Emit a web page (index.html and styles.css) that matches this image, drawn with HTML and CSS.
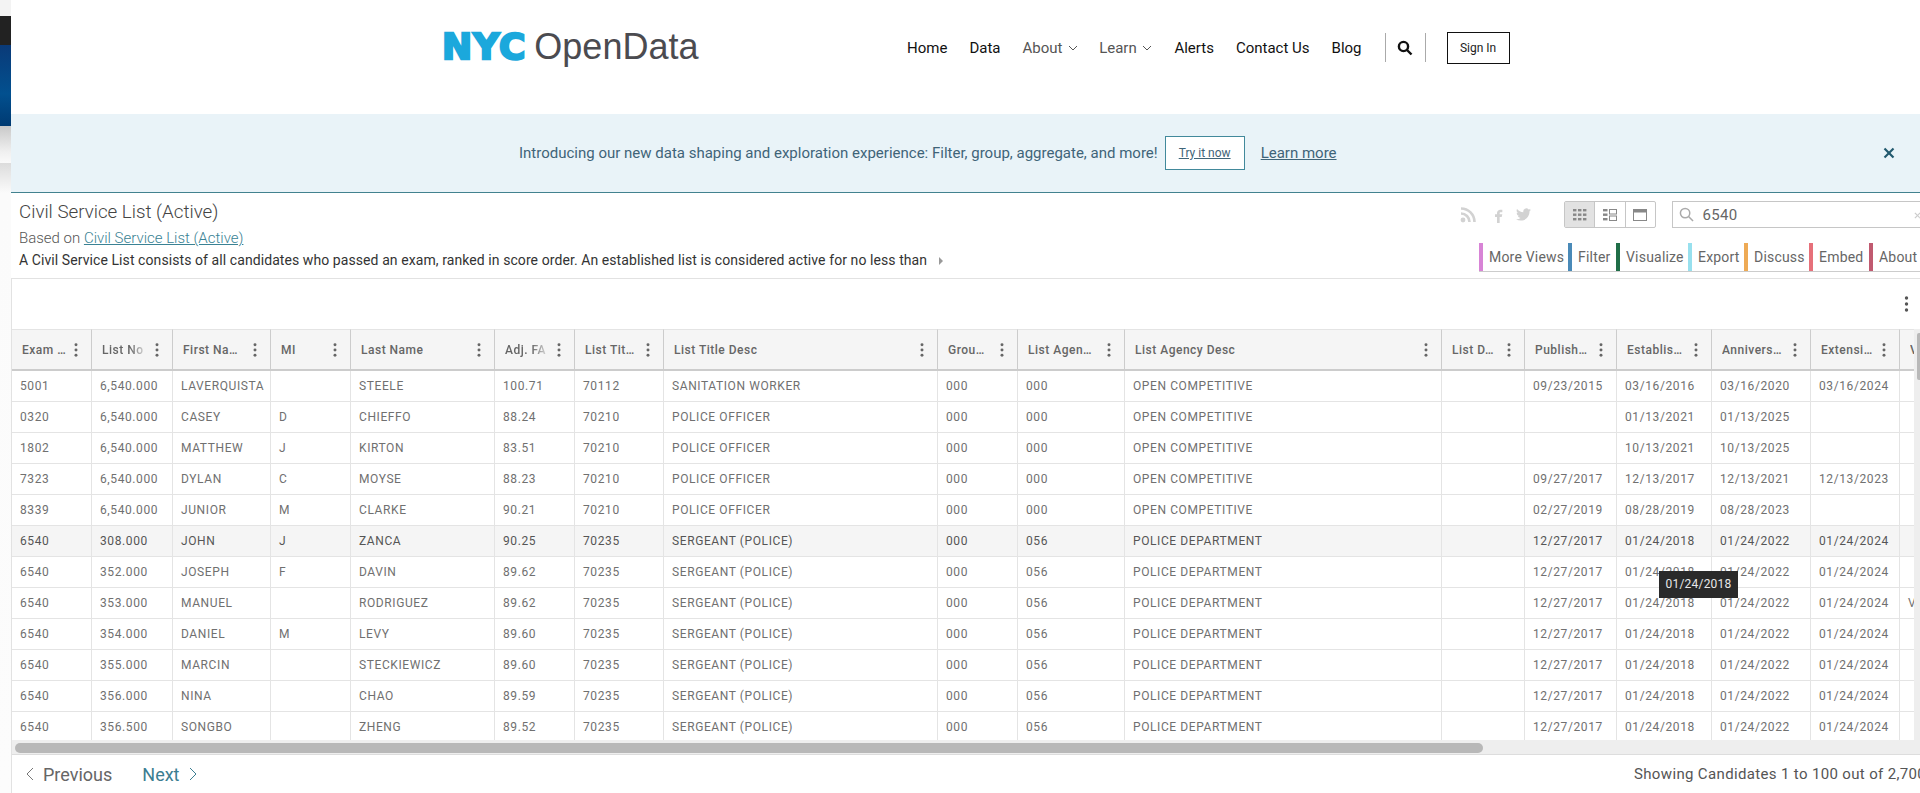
FILE: index.html
```html
<!DOCTYPE html>
<html lang="en">
<head>
<meta charset="utf-8">
<title>Civil Service List (Active) | NYC Open Data</title>
<link rel="stylesheet" href="styles.css">
</head>
<body>
<div class="shell">
  <div class="strip">
    <div class="strip-top"></div>
    <div class="strip-dark"></div>
    <div class="strip-blue"></div>
    <div class="strip-fade"></div>
    <div class="strip-rest"></div>
  </div>
  <div class="page">
    <header class="site-header">
      <a class="logo"><span class="logo-nyc">NYC</span><span class="logo-open">OpenData</span></a>
      <nav class="nav">
        <a class="nav-home">Home</a>
        <a class="nav-data">Data</a>
        <a class="nav-sub nav-about">About <svg class="caret" viewBox="0 0 10 6"><polyline points="1,1 5,5 9,1"/></svg></a>
        <a class="nav-sub nav-learn">Learn <svg class="caret" viewBox="0 0 10 6"><polyline points="1,1 5,5 9,1"/></svg></a>
        <a class="nav-alerts">Alerts</a>
        <a class="nav-contact">Contact Us</a>
        <a class="nav-blog">Blog</a>
        <span class="nav-search"><svg class="nav-glass" viewBox="0 0 16 16"><circle cx="6.5" cy="6.5" r="4.6"/><line x1="10" y1="10" x2="14.5" y2="14.5"/></svg></span>
        <a class="signin">Sign In</a>
      </nav>
    </header>

    <section class="banner">
      <span class="banner-text">Introducing our new data shaping and exploration experience: Filter, group, aggregate, and more!</span>
      <a class="try">Try it now</a>
      <a class="learn">Learn more</a>
      <svg class="banner-close" viewBox="0 0 12 12"><line x1="1.5" y1="1.5" x2="10.5" y2="10.5"/><line x1="10.5" y1="1.5" x2="1.5" y2="10.5"/></svg>
    </section>

    <section class="meta">
      <div class="meta-left">
        <h1 class="title">Civil Service List (Active)</h1>
        <p class="based">Based on <a>Civil Service List (Active)</a></p>
        <p class="desc">A Civil Service List consists of all candidates who passed an exam, ranked in score order. An established list is considered active for no less than <svg class="more-arrow" viewBox="0 0 6 10"><polygon points="1,1 5,5 1,9"/></svg></p>
      </div>
      <div class="meta-right">
        <div class="tools">
          <svg class="soc soc-rss" viewBox="0 0 16 16"><circle cx="3" cy="13" r="2.4" class="fillg"/><path d="M1 6.5a8.5 8.5 0 0 1 8.5 8.5" class="strokeg"/><path d="M1 1.5A13.5 13.5 0 0 1 14.5 15" class="strokeg"/></svg>
          <svg class="soc soc-f" viewBox="0 0 24 24"><path class="fillg" d="M14 8h3V4h-3c-2.8 0-5 2.2-5 5v2H6v4h3v9h4v-9h3l1-4h-4V9c0-.6.4-1 1-1z"/></svg>
          <svg class="soc soc-tw" viewBox="0 0 24 24"><path class="fillg" d="M23.953 4.57a10 10 0 01-2.825.775 4.958 4.958 0 002.163-2.723c-.951.555-2.005.959-3.127 1.184a4.92 4.92 0 00-8.384 4.482C7.69 8.095 4.067 6.13 1.64 3.162a4.822 4.822 0 00-.666 2.475c0 1.71.87 3.213 2.188 4.096a4.904 4.904 0 01-2.228-.616v.06a4.923 4.923 0 003.946 4.827 4.996 4.996 0 01-2.212.085 4.936 4.936 0 004.604 3.417 9.867 9.867 0 01-6.102 2.105c-.39 0-.779-.023-1.17-.067a13.995 13.995 0 007.557 2.209c9.053 0 13.998-7.496 13.998-13.985 0-.21 0-.42-.015-.63A9.935 9.935 0 0024 4.59z"/></svg>
          <div class="views">
            <span class="view view-on"><svg viewBox="0 0 14 12"><rect x="0" y="0" width="3.4" height="2.4"/><rect x="5" y="0" width="3.4" height="2.4"/><rect x="10" y="0" width="3.4" height="2.4"/><rect x="0" y="4.5" width="3.4" height="2.4"/><rect x="5" y="4.5" width="3.4" height="2.4"/><rect x="10" y="4.5" width="3.4" height="2.4"/><rect x="0" y="9" width="3.4" height="2.4"/><rect x="5" y="9" width="3.4" height="2.4"/><rect x="10" y="9" width="3.4" height="2.4"/></svg></span>
            <span class="view"><svg viewBox="0 0 14 12"><rect x="0" y="0" width="4.5" height="2.4"/><rect x="0" y="4.5" width="4.5" height="2.4"/><rect x="0" y="9" width="4.5" height="2.4"/><rect class="hollow" x="6.5" y="0.5" width="7" height="4.5"/><rect class="hollow" x="6.5" y="7" width="7" height="4.5"/></svg></span>
            <span class="view"><svg viewBox="0 0 14 12"><rect x="0" y="0" width="14" height="3"/><rect class="hollow" x="0.5" y="3" width="13" height="8.5"/></svg></span>
          </div>
          <div class="search">
            <svg class="glass" viewBox="0 0 16 16"><circle cx="6.5" cy="6.5" r="5"/><line x1="10.2" y1="10.2" x2="15" y2="15"/></svg>
            <span class="search-value">6540</span>
            <svg class="search-x" viewBox="0 0 8 8"><line x1="1" y1="1" x2="7" y2="7"/><line x1="7" y1="1" x2="1" y2="7"/></svg>
          </div>
        </div>
        <div class="tabs">
          <a class="tab tab-views">More Views</a>
          <a class="tab tab-filter">Filter</a>
          <a class="tab tab-vis">Visualize</a>
          <a class="tab tab-export">Export</a>
          <a class="tab tab-discuss">Discuss</a>
          <a class="tab tab-embed">Embed</a>
          <a class="tab tab-about">About</a>
        </div>
      </div>
    </section>

    <section class="panel">
      <div class="panel-bar"><svg class="kebab kebab-main" viewBox="0 0 4 16"><circle cx="2" cy="2" r="1.7"/><circle cx="2" cy="8" r="1.7"/><circle cx="2" cy="14" r="1.7"/></svg></div>
      <div class="grid-row">
        <div class="grid-clip">
          <table class="grid">
            <colgroup>
              <col class="c1"><col class="c2"><col class="c3"><col class="c4"><col class="c5"><col class="c6"><col class="c7"><col class="c8"><col class="c9"><col class="c10"><col class="c11"><col class="c12"><col class="c13"><col class="c14"><col class="c15"><col class="c16"><col class="c17">
            </colgroup>
            <thead>
              <tr>
                <th><div class="hc"><span>Exam …</span><svg class="kebab" viewBox="0 0 4 16"><circle cx="2" cy="2" r="1.7"/><circle cx="2" cy="8" r="1.7"/><circle cx="2" cy="14" r="1.7"/></svg></div></th>
                <th><div class="hc"><span class="fade">List No</span><svg class="kebab" viewBox="0 0 4 16"><circle cx="2" cy="2" r="1.7"/><circle cx="2" cy="8" r="1.7"/><circle cx="2" cy="14" r="1.7"/></svg></div></th>
                <th><div class="hc"><span>First Na…</span><svg class="kebab" viewBox="0 0 4 16"><circle cx="2" cy="2" r="1.7"/><circle cx="2" cy="8" r="1.7"/><circle cx="2" cy="14" r="1.7"/></svg></div></th>
                <th><div class="hc"><span>MI</span><svg class="kebab" viewBox="0 0 4 16"><circle cx="2" cy="2" r="1.7"/><circle cx="2" cy="8" r="1.7"/><circle cx="2" cy="14" r="1.7"/></svg></div></th>
                <th><div class="hc"><span>Last Name</span><svg class="kebab" viewBox="0 0 4 16"><circle cx="2" cy="2" r="1.7"/><circle cx="2" cy="8" r="1.7"/><circle cx="2" cy="14" r="1.7"/></svg></div></th>
                <th><div class="hc"><span class="fade">Adj. FA</span><svg class="kebab" viewBox="0 0 4 16"><circle cx="2" cy="2" r="1.7"/><circle cx="2" cy="8" r="1.7"/><circle cx="2" cy="14" r="1.7"/></svg></div></th>
                <th><div class="hc"><span>List Tit…</span><svg class="kebab" viewBox="0 0 4 16"><circle cx="2" cy="2" r="1.7"/><circle cx="2" cy="8" r="1.7"/><circle cx="2" cy="14" r="1.7"/></svg></div></th>
                <th><div class="hc"><span>List Title Desc</span><svg class="kebab" viewBox="0 0 4 16"><circle cx="2" cy="2" r="1.7"/><circle cx="2" cy="8" r="1.7"/><circle cx="2" cy="14" r="1.7"/></svg></div></th>
                <th><div class="hc"><span>Grou…</span><svg class="kebab" viewBox="0 0 4 16"><circle cx="2" cy="2" r="1.7"/><circle cx="2" cy="8" r="1.7"/><circle cx="2" cy="14" r="1.7"/></svg></div></th>
                <th><div class="hc"><span>List Agen…</span><svg class="kebab" viewBox="0 0 4 16"><circle cx="2" cy="2" r="1.7"/><circle cx="2" cy="8" r="1.7"/><circle cx="2" cy="14" r="1.7"/></svg></div></th>
                <th><div class="hc"><span>List Agency Desc</span><svg class="kebab" viewBox="0 0 4 16"><circle cx="2" cy="2" r="1.7"/><circle cx="2" cy="8" r="1.7"/><circle cx="2" cy="14" r="1.7"/></svg></div></th>
                <th><div class="hc"><span>List D…</span><svg class="kebab" viewBox="0 0 4 16"><circle cx="2" cy="2" r="1.7"/><circle cx="2" cy="8" r="1.7"/><circle cx="2" cy="14" r="1.7"/></svg></div></th>
                <th><div class="hc"><span>Publish…</span><svg class="kebab" viewBox="0 0 4 16"><circle cx="2" cy="2" r="1.7"/><circle cx="2" cy="8" r="1.7"/><circle cx="2" cy="14" r="1.7"/></svg></div></th>
                <th><div class="hc"><span>Establis…</span><svg class="kebab" viewBox="0 0 4 16"><circle cx="2" cy="2" r="1.7"/><circle cx="2" cy="8" r="1.7"/><circle cx="2" cy="14" r="1.7"/></svg></div></th>
                <th><div class="hc"><span>Annivers…</span><svg class="kebab" viewBox="0 0 4 16"><circle cx="2" cy="2" r="1.7"/><circle cx="2" cy="8" r="1.7"/><circle cx="2" cy="14" r="1.7"/></svg></div></th>
                <th><div class="hc"><span>Extensi…</span><svg class="kebab" viewBox="0 0 4 16"><circle cx="2" cy="2" r="1.7"/><circle cx="2" cy="8" r="1.7"/><circle cx="2" cy="14" r="1.7"/></svg></div></th>
                <th><div class="hc"><span>V</span></div></th>
              </tr>
            </thead>
            <tbody>
              <tr><td>5001</td><td>6,540.000</td><td>LAVERQUISTA</td><td></td><td>STEELE</td><td>100.71</td><td>70112</td><td>SANITATION WORKER</td><td>000</td><td>000</td><td>OPEN COMPETITIVE</td><td></td><td>09/23/2015</td><td>03/16/2016</td><td>03/16/2020</td><td>03/16/2024</td><td></td></tr>
              <tr><td>0320</td><td>6,540.000</td><td>CASEY</td><td>D</td><td>CHIEFFO</td><td>88.24</td><td>70210</td><td>POLICE OFFICER</td><td>000</td><td>000</td><td>OPEN COMPETITIVE</td><td></td><td></td><td>01/13/2021</td><td>01/13/2025</td><td></td><td></td></tr>
              <tr><td>1802</td><td>6,540.000</td><td>MATTHEW</td><td>J</td><td>KIRTON</td><td>83.51</td><td>70210</td><td>POLICE OFFICER</td><td>000</td><td>000</td><td>OPEN COMPETITIVE</td><td></td><td></td><td>10/13/2021</td><td>10/13/2025</td><td></td><td></td></tr>
              <tr><td>7323</td><td>6,540.000</td><td>DYLAN</td><td>C</td><td>MOYSE</td><td>88.23</td><td>70210</td><td>POLICE OFFICER</td><td>000</td><td>000</td><td>OPEN COMPETITIVE</td><td></td><td>09/27/2017</td><td>12/13/2017</td><td>12/13/2021</td><td>12/13/2023</td><td></td></tr>
              <tr><td>8339</td><td>6,540.000</td><td>JUNIOR</td><td>M</td><td>CLARKE</td><td>90.21</td><td>70210</td><td>POLICE OFFICER</td><td>000</td><td>000</td><td>OPEN COMPETITIVE</td><td></td><td>02/27/2019</td><td>08/28/2019</td><td>08/28/2023</td><td></td><td></td></tr>
              <tr class="row-hover"><td>6540</td><td>308.000</td><td>JOHN</td><td>J</td><td>ZANCA</td><td>90.25</td><td>70235</td><td>SERGEANT (POLICE)</td><td>000</td><td>056</td><td>POLICE DEPARTMENT</td><td></td><td>12/27/2017</td><td>01/24/2018</td><td>01/24/2022</td><td>01/24/2024</td><td></td></tr>
              <tr><td>6540</td><td>352.000</td><td>JOSEPH</td><td>F</td><td>DAVIN</td><td>89.62</td><td>70235</td><td>SERGEANT (POLICE)</td><td>000</td><td>056</td><td>POLICE DEPARTMENT</td><td></td><td>12/27/2017</td><td>01/24/2018</td><td>01/24/2022</td><td>01/24/2024</td><td></td></tr>
              <tr><td>6540</td><td>353.000</td><td>MANUEL</td><td></td><td>RODRIGUEZ</td><td>89.62</td><td>70235</td><td>SERGEANT (POLICE)</td><td>000</td><td>056</td><td>POLICE DEPARTMENT</td><td></td><td>12/27/2017</td><td>01/24/2018</td><td>01/24/2022</td><td>01/24/2024</td><td>V</td></tr>
              <tr><td>6540</td><td>354.000</td><td>DANIEL</td><td>M</td><td>LEVY</td><td>89.60</td><td>70235</td><td>SERGEANT (POLICE)</td><td>000</td><td>056</td><td>POLICE DEPARTMENT</td><td></td><td>12/27/2017</td><td>01/24/2018</td><td>01/24/2022</td><td>01/24/2024</td><td></td></tr>
              <tr><td>6540</td><td>355.000</td><td>MARCIN</td><td></td><td>STECKIEWICZ</td><td>89.60</td><td>70235</td><td>SERGEANT (POLICE)</td><td>000</td><td>056</td><td>POLICE DEPARTMENT</td><td></td><td>12/27/2017</td><td>01/24/2018</td><td>01/24/2022</td><td>01/24/2024</td><td></td></tr>
              <tr><td>6540</td><td>356.000</td><td>NINA</td><td></td><td>CHAO</td><td>89.59</td><td>70235</td><td>SERGEANT (POLICE)</td><td>000</td><td>056</td><td>POLICE DEPARTMENT</td><td></td><td>12/27/2017</td><td>01/24/2018</td><td>01/24/2022</td><td>01/24/2024</td><td></td></tr>
              <tr><td>6540</td><td>356.500</td><td>SONGBO</td><td></td><td>ZHENG</td><td>89.52</td><td>70235</td><td>SERGEANT (POLICE)</td><td>000</td><td>056</td><td>POLICE DEPARTMENT</td><td></td><td>12/27/2017</td><td>01/24/2018</td><td>01/24/2022</td><td>01/24/2024</td><td></td></tr>
            </tbody>
          </table>
        </div>
        <div class="vscroll"><div class="vthumb"></div></div>
      </div>
      <div class="hscroll"><div class="hthumb"></div></div>
      <footer class="pager">
        <div class="pager-links">
          <a class="prev"><svg class="chev" viewBox="0 0 8 14"><polyline points="7,1 1,7 7,13"/></svg>Previous</a>
          <a class="next">Next<svg class="chev" viewBox="0 0 8 14"><polyline points="1,1 7,7 1,13"/></svg></a>
        </div>
        <span class="showing">Showing Candidates 1 to 100 out of 2,700</span>
      </footer>
      <div class="tooltip">01/24/2018</div>
    </section>
  </div>
</div>
</body>
</html>
```

FILE: styles.css
```css
* { box-sizing: border-box; }
html, body { margin: 0; padding: 0; height: 793px; overflow: hidden; background: #fff; }
body { font-family: Roboto, "Liberation Sans", sans-serif; color: #444; }
a { color: inherit; text-decoration: none; }
h1, p { margin: 0; }

.shell { display: flex; width: 1920px; height: 793px; overflow: hidden; }

.strip { width: 11px; flex: none; display: flex; flex-direction: column; }
.strip-top { height: 16px; background: #f3f3f3; }
.strip-dark { height: 29px; background: #222; }
.strip-blue { height: 81px; background: linear-gradient(180deg, #0a3a78 0%, #02508f 60%, #003a72 100%); }
.strip-fade { height: 37px; background: linear-gradient(180deg, #c9c9c9 0%, #f0f0f0 70%, #fafafa 100%); }
.strip-rest { flex: 1; background: linear-gradient(180deg, #dcdcdc 0, #fbfbfb 30px, #fcfcfc 100%); }

.page { width: 1909px; flex: none; display: flex; flex-direction: column; position: relative; overflow: hidden; }

.site-header { height: 114px; flex: none; display: flex; align-items: flex-start; padding-left: 431px; }
.logo { display: flex; align-items: baseline; margin-top: 27px; width: 465px; flex: none; }
.logo-nyc { font-family: "DejaVu Sans", sans-serif; font-weight: 700; font-size: 36px; line-height: 40px; color: #1ba8dc; -webkit-text-stroke: 2.4px #1ba8dc; letter-spacing: 1px; }
.logo-open { font-family: "Liberation Sans", sans-serif; font-size: 36px; line-height: 40px; color: #4b4b50; margin-left: 8px; }

.nav { display: flex; align-items: center; height: 31px; margin-top: 32px; font-size: 15px; color: #111; }
.nav a { display: block; }
.nav-data { margin-left: 22px; }
.nav-about { margin-left: 22px; }
.nav-learn { margin-left: 21px; }
.nav-alerts { margin-left: 22px; }
.nav-contact { margin-left: 22px; }
.nav-blog { margin-left: 22px; }
.nav-sub { color: #555; }
.caret { width: 10px; height: 6px; margin-left: 2px; vertical-align: 2px; fill: none; stroke: #555; stroke-width: 1; }
.nav-search { display: flex; align-items: center; justify-content: center; width: 41px; height: 29px; margin-left: 23px; border-left: 1px solid #aaa; border-right: 1px solid #aaa; }
.nav-glass { width: 16px; height: 16px; fill: none; stroke: #111; stroke-width: 2.4; }
.signin { width: 63px; height: 32px; margin-left: 21px; border: 1px solid #111; font-size: 12px; line-height: 31px; text-align: center; color: #222; }

.banner { height: 79px; flex: none; display: flex; align-items: center; padding-left: 508px; background: #e9f3f8; border-bottom: 1px solid #42828f; color: #3f6478; font-size: 15px; position: relative; }
.try { width: 80px; height: 34px; margin-left: 7px; background: #fff; border: 1px solid #42899b; font-size: 12px; line-height: 32px; text-align: center; text-decoration: underline; color: #3f6478; }
.learn { margin-left: 16px; text-decoration: underline; }
.banner-close { position: absolute; left: 1872px; top: 33px; width: 12px; height: 12px; fill: none; stroke: #22596e; stroke-width: 2.2; }

.meta { height: 85px; flex: none; display: flex; overflow: hidden; }
.meta-left { width: 1449px; flex: none; padding-left: 8px; }
.title { font-size: 18.75px; font-weight: 300; line-height: 24px; margin-top: 7px; color: #444; }
.based { font-size: 15px; font-weight: 300; line-height: 18px; margin-top: 5px; color: #555; }
.based a { color: #3a8294; text-decoration: underline; }
.desc { font-size: 14px; line-height: 18px; margin-top: 4px; color: #333; white-space: nowrap; letter-spacing: .08px; }
.more-arrow { width: 6px; height: 10px; margin-left: 7px; fill: #999; vertical-align: -1px; }

.meta-right { width: 460px; flex: none; padding-top: 8px; overflow: hidden; }
.tools { display: flex; align-items: center; height: 27px; }
.soc { flex: none; }
.fillg { fill: #d2d2d2; }
.strokeg { fill: none; stroke: #d2d2d2; stroke-width: 2.6; }
.soc-rss { width: 16px; height: 16px; }
.soc-f { width: 16px; height: 16px; margin-left: 15px; }
.soc-tw { width: 15px; height: 15px; margin-left: 9px; }
.views { display: flex; flex: none; width: 92px; height: 27px; margin-left: 33px; border: 1px solid #c6c6c6; border-radius: 2px; }
.view { flex: 1; display: flex; align-items: center; justify-content: center; border-right: 1px solid #c6c6c6; }
.view:last-child { border-right: 0; }
.view-on { background: #e2e2e2; }
.view svg { width: 14px; height: 12px; fill: #888; }
.view svg .hollow { fill: none; stroke: #888; stroke-width: 1; }
.search { display: flex; align-items: center; flex: none; width: 265px; height: 27px; margin-left: 16px; border: 1px solid #c6c6c6; padding-left: 6px; position: relative; }
.glass { width: 15px; height: 15px; fill: none; stroke: #aaa; stroke-width: 1.6; flex: none; }
.search-value { margin-left: 8.5px; font-size: 15px; color: #666; letter-spacing: .3px; }
.search-x { position: absolute; left: 241px; top: 10px; width: 7px; height: 7px; fill: none; stroke: #ccc; stroke-width: 1.4; }

.tabs { display: flex; height: 29px; margin-top: 15px; margin-left: 19px; border-bottom: 1px solid #ccc; font-size: 14px; color: #666; letter-spacing: .2px; white-space: nowrap; }
.tab { display: block; flex: none; height: 28px; line-height: 28px; padding-left: 6px; border-left: 4px solid #ccc; }
.tab-views { width: 89px; border-color: #d884d6; }
.tab-filter { width: 48px; border-color: #4a8ab8; }
.tab-vis { width: 72px; border-color: #1f6e48; }
.tab-export { width: 56px; border-color: #98e0ee; }
.tab-discuss { width: 65px; border-color: #eeaa55; }
.tab-embed { width: 60px; border-color: #e6707a; }
.tab-about { width: 60px; border-color: #c05a70; }

.panel { flex: 1; min-height: 0; display: flex; flex-direction: column; border-left: 1px solid #e2e2e2; border-top: 1px solid #e2e2e2; position: relative; }
.panel-bar { height: 50px; flex: none; display: flex; align-items: center; justify-content: flex-end; padding-right: 11px; }
.kebab { width: 4px; height: 14px; flex: none; fill: #666; }
.kebab-main { width: 5px; height: 16px; fill: #555; }

.grid-row { height: 411px; flex: none; display: flex; overflow: hidden; }
.grid-clip { width: 1902px; flex: none; overflow: hidden; }
.vscroll { flex: 1; background: #eee; padding: 4px 0 0 3px; }
.vthumb { height: 47px; background: #b8b8b8; border-radius: 2px 0 0 2px; }

.grid { width: 1950px; table-layout: fixed; border-collapse: separate; border-spacing: 0; font-size: 12px; }
.c1 { width: 80px; } .c2 { width: 81px; } .c3 { width: 98px; } .c4 { width: 80px; }
.c5 { width: 144px; } .c6 { width: 80px; } .c7 { width: 89px; } .c8 { width: 274px; }
.c9 { width: 80px; } .c10 { width: 107px; } .c11 { width: 317px; } .c12 { width: 83px; }
.c13 { width: 92px; } .c14 { width: 95px; } .c15 { width: 99px; } .c16 { width: 89px; } .c17 { width: 62px; }

.grid th { height: 42px; padding: 0; background: #f5f5f5; border-top: 1px solid #e4e4e4; border-right: 1px solid #ccc; border-bottom: 2px solid #ccc; font-weight: 500; text-align: left; color: #666; letter-spacing: .5px; }
.hc { display: flex; align-items: center; justify-content: space-between; padding: 0 13px 0 10px; white-space: nowrap; overflow: hidden; }
.hc span { overflow: hidden; }
.hc .fade { -webkit-mask-image: linear-gradient(90deg, #000 65%, rgba(0,0,0,.25) 100%); mask-image: linear-gradient(90deg, #000 65%, rgba(0,0,0,.25) 100%); }
.grid td { height: 31px; padding: 0 8px; border-right: 1px solid #e4e4e4; border-bottom: 1px solid #e4e4e4; color: #707070; letter-spacing: .6px; white-space: nowrap; overflow: hidden; }
.row-hover td { background: #f5f5f5; color: #555; }

.hscroll { height: 15px; flex: none; background: #eee; padding: 3px 0 2px 3px; border-bottom: 1px solid #ddd; }
.hthumb { width: 1468px; height: 10px; background: #b8b8b8; border-radius: 5px; }

.pager { flex: 1; display: flex; align-items: center; justify-content: space-between; overflow: hidden; white-space: nowrap; }
.pager-links { display: flex; align-items: center; padding-left: 14px; font-size: 18px; }
.chev { width: 8px; height: 14px; fill: none; stroke: #777; stroke-width: 1; flex: none; }
.prev { display: flex; align-items: center; color: #666; }
.prev .chev { margin-right: 9px; }
.next { display: flex; align-items: center; margin-left: 30px; color: #3b7d91; }
.next .chev { margin-left: 9px; stroke: #3b7d91; }
.showing { width: 286px; flex: none; font-size: 15px; color: #555; letter-spacing: .35px; }

.tooltip { position: absolute; left: 1647px; top: 292px; width: 79px; height: 27px; background: #2a2a2a; color: #e8e8e8; font-size: 12px; line-height: 27px; text-align: center; letter-spacing: .2px; }
```
